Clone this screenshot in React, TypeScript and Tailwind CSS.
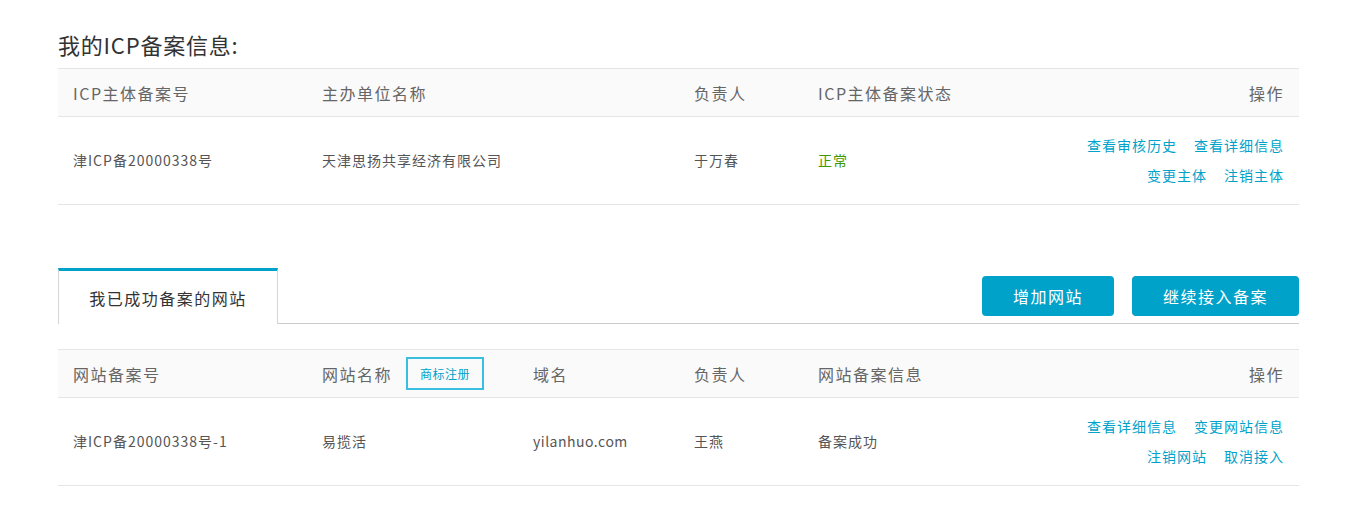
import React from 'react';

const linkCls = 'text-[#00a2ca] hover:underline cursor-pointer';

function Links({ rows }: { rows: string[][] }) {
  return (
    <div className="flex flex-col items-end gap-[9px]">
      {rows.map((r, i) => (
        <div key={i} className="flex gap-[17px]">
          {r.map((t) => (
            <a key={t} className={linkCls}>
              {t}
            </a>
          ))}
        </div>
      ))}
    </div>
  );
}

export default function App() {
  return (
    <div className="min-h-screen bg-white font-['Noto_Sans_CJK_SC','Noto_Sans',sans-serif]">
      <div className="ml-[58px] w-[1241px] pt-[29px]">
        {/* Title */}
        <h1 className="text-[22px] leading-[30px] text-[#333] tracking-[0.8px] mb-[9px]">我的ICP备案信息:</h1>

        {/* ICP main table */}
        <div className="border-t border-[#e5e5e5]">
          <div className="grid grid-cols-[249px_372px_124px_1fr_auto] h-[48px] items-center bg-[#fafafa] border-b border-[#e5e5e5] text-[16px] tracking-[1.5px] text-[#666]">
            <div className="pl-[15px]">ICP主体备案号</div>
            <div className="pl-[15px]">主办单位名称</div>
            <div className="pl-[15px]">负责人</div>
            <div className="pl-[15px]">ICP主体备案状态</div>
            <div className="pr-[15px] text-right">操作</div>
          </div>
          <div className="grid grid-cols-[249px_372px_124px_1fr_auto] h-[88px] items-center border-b border-[#e5e5e5] text-[14px] tracking-[1px] text-[#555]">
            <div className="pl-[15px]">津ICP备20000338号</div>
            <div className="pl-[15px]">天津思扬共享经济有限公司</div>
            <div className="pl-[15px]">于万春</div>
            <div className="pl-[15px] text-[#3c9a00]">正常</div>
            <div className="pr-[15px]">
              <Links rows={[['查看审核历史', '查看详细信息'], ['变更主体', '注销主体']]} />
            </div>
          </div>
        </div>

        {/* Tab bar */}
        <div className="mt-[63px] flex items-start border-b border-[#cccccc]">
          <div className="w-[220px] h-[56px] -mb-px bg-white border-t-[3px] border-t-[#00a2ca] border-l border-r border-[#d5d5d5] flex items-center justify-center text-[16px] tracking-[1.5px] text-[#333]">
            我已成功备案的网站
          </div>
          <div className="flex-1 flex justify-end gap-[18px] pt-[8px]">
            <button className="w-[132px] h-[40px] rounded-[4px] bg-[#00a2ca] text-white text-[16px] tracking-[1.5px]">增加网站</button>
            <button className="w-[167px] h-[40px] rounded-[4px] bg-[#00a2ca] text-white text-[16px] tracking-[1.5px]">继续接入备案</button>
          </div>
        </div>

        {/* Website table */}
        <div className="mt-[25px] border-t border-[#e5e5e5]">
          <div className="grid grid-cols-[249px_211px_161px_124px_1fr_auto] h-[48px] items-center bg-[#fafafa] border-b border-[#e5e5e5] text-[16px] tracking-[1.5px] text-[#666]">
            <div className="pl-[15px]">网站备案号</div>
            <div className="pl-[15px] flex items-center">
              网站名称
              <span className="ml-[14px] w-[78px] h-[33px] border-2 border-[#3bbfe0] flex items-center justify-center text-[12px] tracking-[0.5px] text-[#00a2ca]">
                商标注册
              </span>
            </div>
            <div className="pl-[15px]">域名</div>
            <div className="pl-[15px]">负责人</div>
            <div className="pl-[15px]">网站备案信息</div>
            <div className="pr-[15px] text-right">操作</div>
          </div>
          <div className="grid grid-cols-[249px_211px_161px_124px_1fr_auto] h-[88px] items-center border-b border-[#e5e5e5] text-[14px] tracking-[1px] text-[#555]">
            <div className="pl-[15px]">津ICP备20000338号-1</div>
            <div className="pl-[15px]">易揽活</div>
            <div className="pl-[15px] tracking-[0.5px]">yilanhuo.com</div>
            <div className="pl-[15px]">王燕</div>
            <div className="pl-[15px]">备案成功</div>
            <div className="pr-[15px]">
              <Links rows={[['查看详细信息', '变更网站信息'], ['注销网站', '取消接入']]} />
            </div>
          </div>
        </div>
      </div>
    </div>
  );
}
